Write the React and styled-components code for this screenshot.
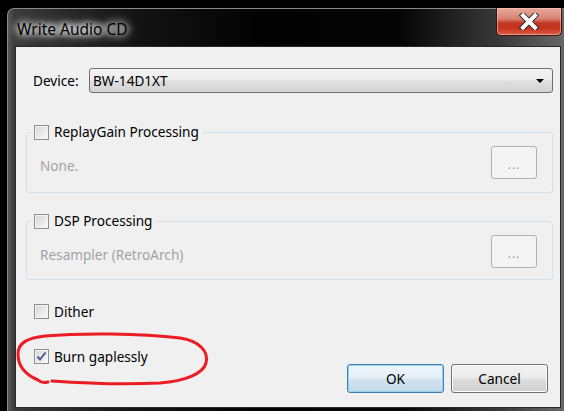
import React from 'react';
import styled, { createGlobalStyle } from 'styled-components';

const Global = createGlobalStyle`
	html, body {
		margin: 0;
		padding: 0;
		background: #000;
	}
	body {
		font-family: 'Noto Sans', 'Open Sans', sans-serif;
	}
`;

const Screen = styled.div`
	width: 564px;
	height: 411px;
	overflow: hidden;
	background: #000;
	padding: 8px 0 0 7px;
	box-sizing: border-box;
`;

const Window = styled.div`
	width: 562px;
	height: 410px;
	box-sizing: border-box;
	border: 1px solid #8a8a8a;
	border-bottom: none;
	border-radius: 7px 7px 0 0;
	padding: 0 5px 0 7px;
	background:
		linear-gradient(90deg, rgba(140, 140, 140, 0.35) 0px, rgba(0, 0, 0, 0) 6px),
		linear-gradient(90deg, #3c3c3c 0%, #141414 22%, #020202 45%, #050505 70%, #3a3a3a 88%, #6a6a6a 100%);
	display: flex;
	flex-direction: column;
`;

const TitleBar = styled.div`
	height: 37px;
	display: flex;
	justify-content: space-between;
	align-items: flex-start;
	padding-right: 1px;
`;

const Title = styled.div`
	margin: 10px 0 0 -4px;
	padding: 0 6px;
	font-size: 15.5px;
	line-height: 20px;
	color: #000;
	text-shadow: 0 0 6px rgba(255, 255, 255, 0.95), 0 0 10px rgba(255, 255, 255, 0.8),
		0 0 16px rgba(230, 230, 230, 0.7);
	background: radial-gradient(ellipse at center, rgba(200, 200, 200, 0.55) 0%, rgba(120, 120, 120, 0.25) 55%, rgba(0, 0, 0, 0) 75%);
`;

const CloseButton = styled.div`
	width: 66px;
	height: 28px;
	margin-top: -1px;
	box-sizing: border-box;
	border: 1px solid #3b1410;
	border-top: none;
	border-radius: 0 0 5px 5px;
	background: linear-gradient(180deg, #e9a99c 0%, #d98273 40%, #c13a26 55%, #c8321c 75%, #d9604a 100%);
	box-shadow: inset 0 0 0 1px rgba(255, 210, 200, 0.5);
	display: flex;
	align-items: center;
	justify-content: center;
`;

const Client = styled.div`
	position: relative;
	width: 546px;
	height: 362px;
	box-sizing: border-box;
	border: 1px solid #2a2a2a;
	background: #f0f0f0;
	padding: 21px 7px 14px 10px;
	display: flex;
	flex-direction: column;
	font-size: 13.6px;
	color: #000;
`;

const DeviceRow = styled.div`
	display: flex;
	align-items: center;
	padding-left: 7px;
	height: 25px;
`;

const Label = styled.span`
	width: 56px;
	flex: none;
`;

const Combo = styled.div`
	flex: 1;
	height: 25px;
	box-sizing: border-box;
	border: 1px solid #707070;
	border-radius: 3px;
	background: linear-gradient(180deg, #f3f3f3 0%, #ececec 45%, #dedede 55%, #d4d4d4 100%);
	display: flex;
	align-items: center;
	justify-content: space-between;
	padding: 0 8px 0 3px;
`;

const Arrow = styled.span`
	width: 0;
	height: 0;
	border-left: 4px solid transparent;
	border-right: 4px solid transparent;
	border-top: 4px solid #000;
`;

const Group = styled.fieldset`
	margin: ${(p) => p.$top}px 0 0 0;
	padding: 6px 15px ${(p) => p.$bottom}px 13px;
	border: 1px solid #d5dfe5;
	border-radius: 3px;
	min-width: 0;
`;

const Legend = styled.legend`
	padding: 0 4px 0 3px;
	margin-left: -9px;
	height: 16px;
	line-height: 16px;
	display: flex;
	align-items: center;
	gap: 5px;
`;

const GroupBody = styled.div`
	display: flex;
	align-items: center;
	justify-content: space-between;
`;

const Disabled = styled.span`
	color: #a3a3a3;
	margin-top: 6px;
`;

const DotsButton = styled.div`
	width: 46px;
	height: 33px;
	box-sizing: border-box;
	border: 1px solid #adb2b5;
	border-radius: 3px;
	background: #f4f4f4;
	color: #9a9a9a;
	font-size: 12px;
	display: flex;
	align-items: center;
	justify-content: center;
	padding-top: 3px;
	letter-spacing: 1px;
`;

const CheckRow = styled.label`
	display: flex;
	align-items: center;
	gap: 5px;
	height: 15px;
	line-height: 15px;
	padding-left: 8px;
	margin-top: ${(p) => p.$top}px;
`;

const Box = styled.span`
	width: 15px;
	height: 15px;
	flex: none;
	box-sizing: border-box;
	border: 1px solid #8e8f8f;
	background: linear-gradient(135deg, #d6d6d6 0%, #e8e8e8 50%, #fafafa 100%);
	box-shadow: inset 0 0 0 1px #f4f4f4;
	display: flex;
	align-items: center;
	justify-content: center;
`;

const Buttons = styled.div`
	margin-top: auto;
	display: flex;
	justify-content: flex-end;
	gap: 7px;
	padding-right: 5px;
`;

const Button = styled.div`
	width: 97px;
	height: 29px;
	box-sizing: border-box;
	border: 1px solid ${(p) => (p.$primary ? '#3c7fb1' : '#707070')};
	border-radius: 3px;
	background: ${(p) =>
		p.$primary
			? 'linear-gradient(180deg, #eef6fb 0%, #e4eff7 48%, #d1e3ef 52%, #c6dae8 100%)'
			: 'linear-gradient(180deg, #f2f2f2 0%, #ebebeb 48%, #dddddd 52%, #cfcfcf 100%)'};
	box-shadow: inset 0 0 0 1px ${(p) => (p.$primary ? '#94d1f5' : '#fcfcfc')};
	display: flex;
	align-items: center;
	justify-content: center;
`;

const Annotation = styled.svg`
	position: absolute;
	left: -1px;
	top: -1px;
	pointer-events: none;
`;

const Checkbox = ({ checked }) => (
	<Box>
		{checked && (
			<svg width="11" height="11" viewBox="0 0 11 11">
				<path d="M1.5 5.5 L4 8.5 L9.5 1.5" fill="none" stroke="#4a5d95" strokeWidth="2" />
			</svg>
		)}
	</Box>
);

const Section = ({ top, bottom, title, value }) => (
	<Group $top={top} $bottom={bottom}>
		<Legend>
			<Checkbox />
			<span>{title}</span>
		</Legend>
		<GroupBody>
			<Disabled>{value}</Disabled>
			<DotsButton>...</DotsButton>
		</GroupBody>
	</Group>
);

const App = () => {
	return (
		<>
			<Global />
			<Screen>
				<Window>
					<TitleBar>
						<Title>Write Audio CD</Title>
						<CloseButton>
							<svg width="20" height="17" viewBox="0 0 20 17">
								<path
									d="M4 2.5 L16 14.5 M16 2.5 L4 14.5"
									stroke="#2b2b2b"
									strokeWidth="6"
									strokeLinecap="square"
								/>
								<path
									d="M4 2.5 L16 14.5 M16 2.5 L4 14.5"
									stroke="#ffffff"
									strokeWidth="4"
									strokeLinecap="square"
								/>
							</svg>
						</CloseButton>
					</TitleBar>
					<Client>
						<DeviceRow>
							<Label>Device:</Label>
							<Combo>
								<span>BW-14D1XT</span>
								<Arrow />
							</Combo>
						</DeviceRow>
						<Section top={31} bottom={13} title="ReplayGain Processing" value="None." />
						<Section top={20} bottom={11} title="DSP Processing" value="Resampler (RetroArch)" />
						<CheckRow $top={24}>
							<Checkbox />
							<span>Dither</span>
						</CheckRow>
						<CheckRow $top={30}>
							<Checkbox checked />
							<span>Burn gaplessly</span>
						</CheckRow>
						<Buttons>
							<Button $primary>OK</Button>
							<Button>Cancel</Button>
						</Buttons>
						<Annotation width="546" height="362" viewBox="15 46 546 362">
							<path
								d="M48 382 C44 383 40 382 38 380 C26 375 18 366 18 354 C18 343 27 338 45 336 C80 333 140 333 180 338 C200 341 209 352 206 363 C203 374 185 381 160 383 C120 385 80 383 52 381"
								fill="none"
								stroke="#ec1c24"
								strokeWidth="3"
								strokeLinecap="round"
							/>
						</Annotation>
					</Client>
				</Window>
			</Screen>
		</>
	);
};

export default App;
